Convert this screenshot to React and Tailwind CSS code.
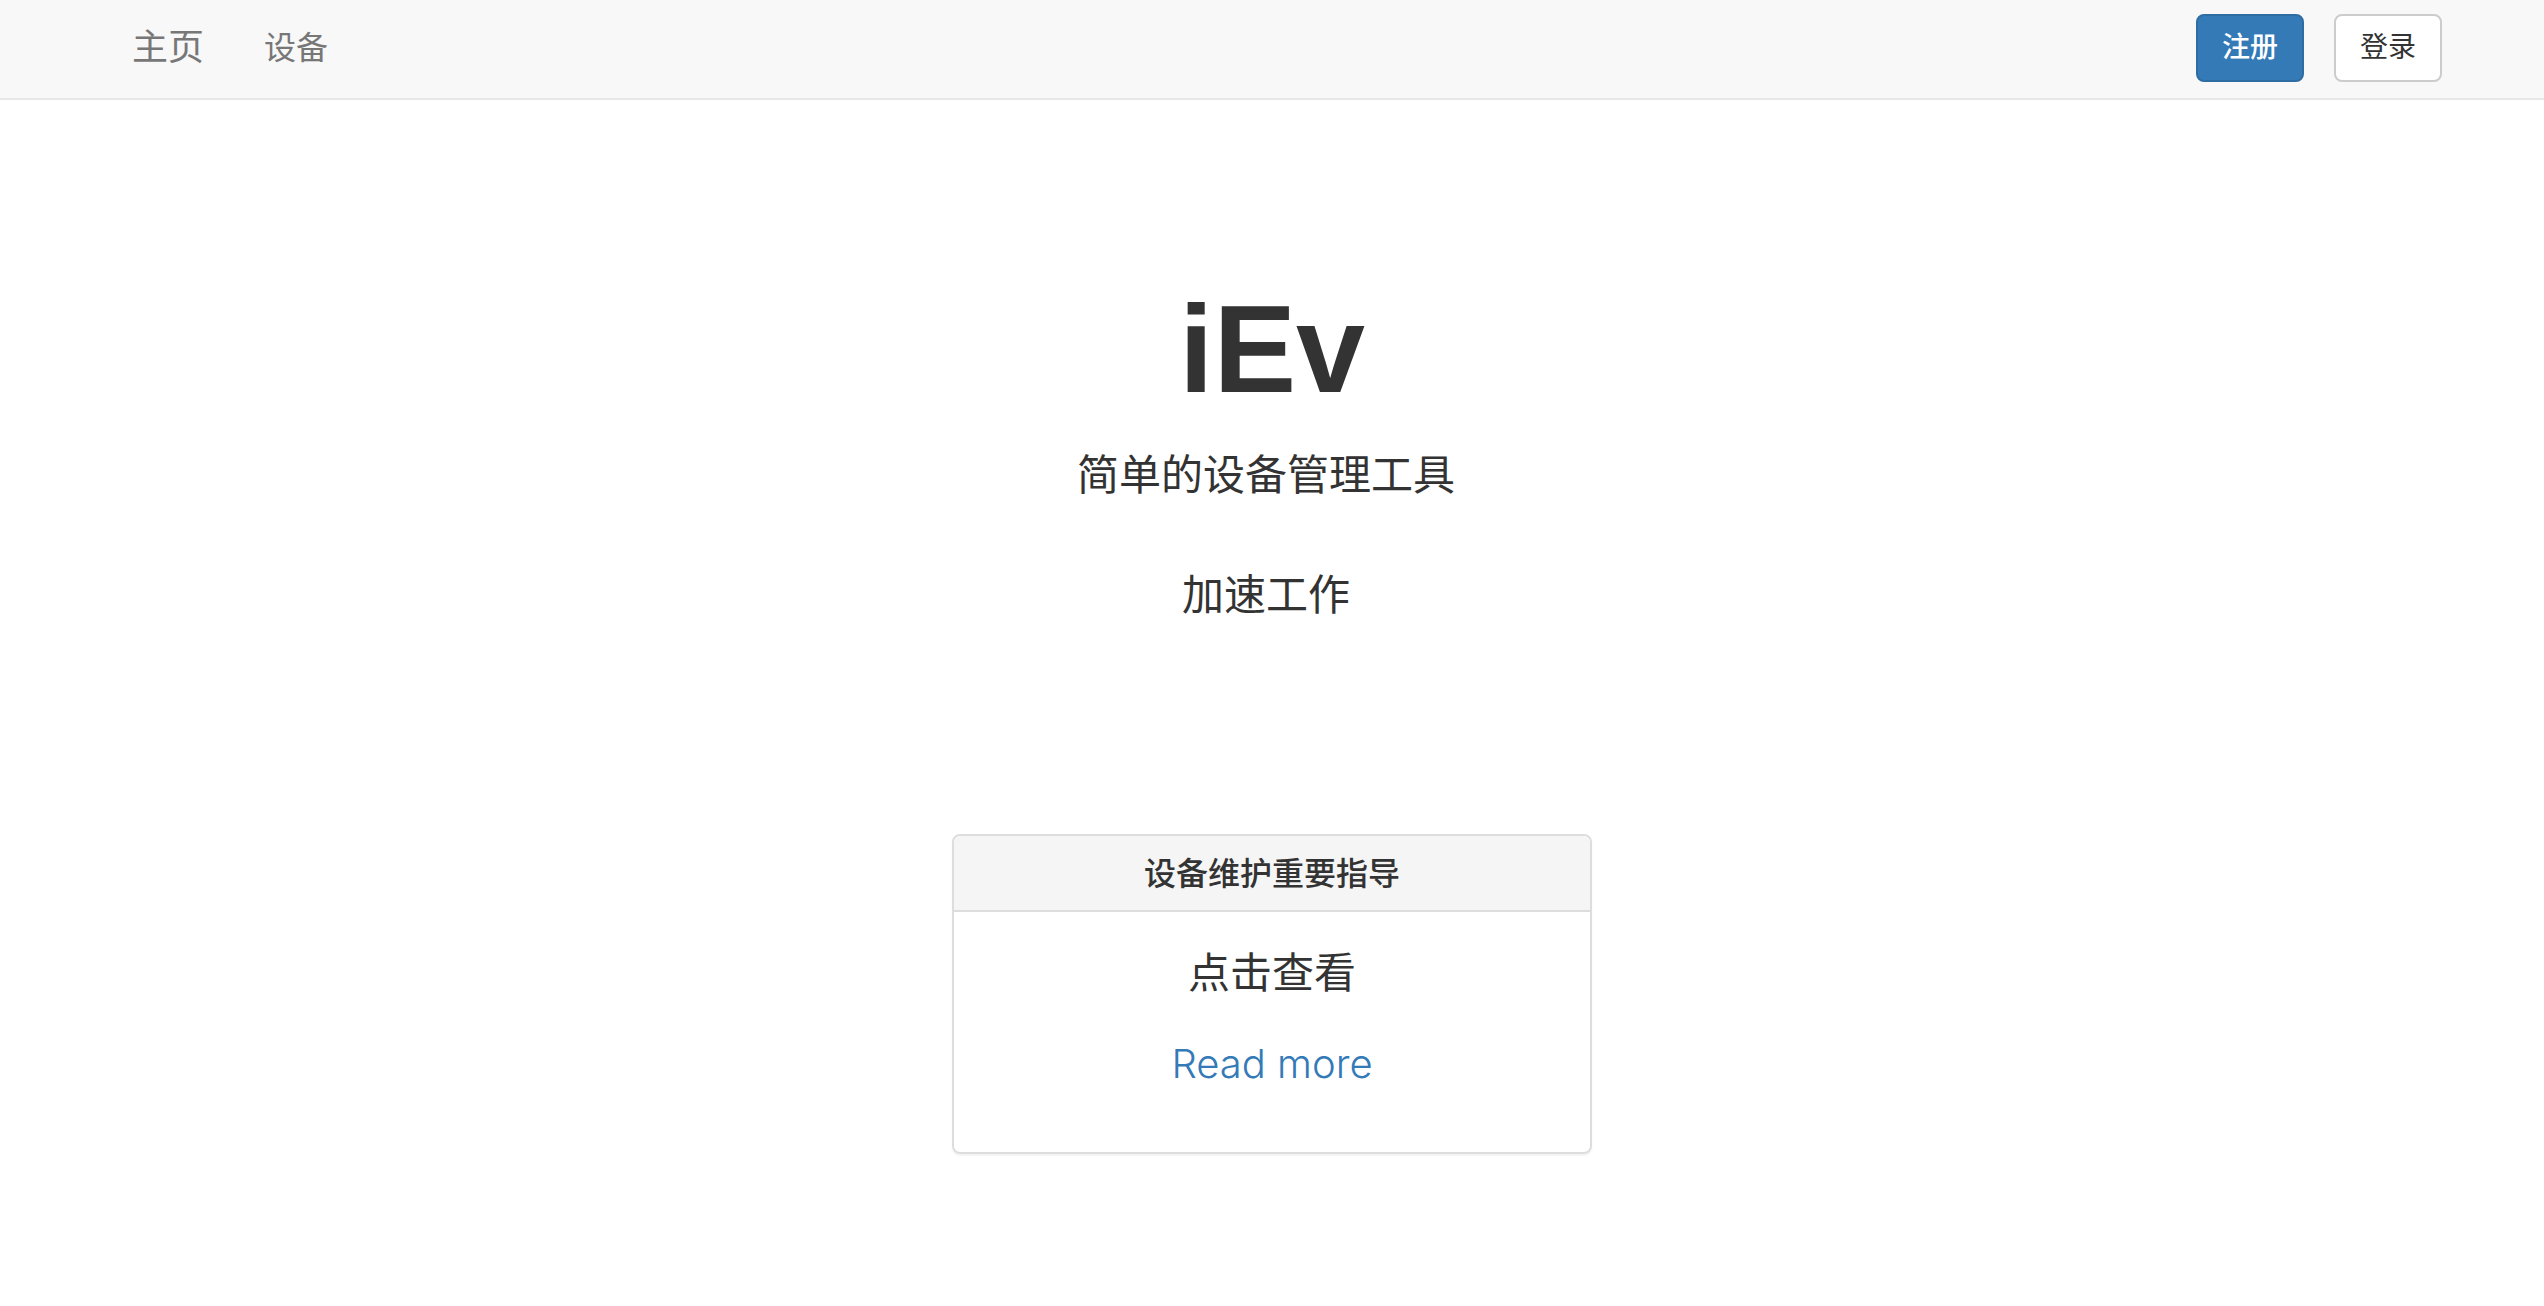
export default function App() {
  return (
    <div className="min-h-screen bg-white text-[#333] font-['Liberation_Sans','Noto_Sans_CJK_SC',sans-serif]">
      <nav className="flex items-center justify-between border-b-2 border-[#e7e7e7] bg-[#f8f8f8] pt-[14px] pr-[102px] pb-4 pl-[132px]">
        <div className="flex items-center gap-[60px] text-[#777]">
          <a href="#home" className="text-[36px] leading-10">主页</a>
          <a href="#devices" className="text-[32px] leading-10">设备</a>
        </div>
        <div className="flex gap-[30px] text-[28px] leading-10">
          <button type="button" className="rounded-lg border-2 border-[#2e6da4] bg-[#337ab7] px-6 py-3 font-medium text-white">注册</button>
          <button type="button" className="rounded-lg border-2 border-[#ccc] bg-white px-6 py-3">登录</button>
        </div>
      </nav>
      <main className="flex flex-col items-center text-center">
        <h1 className="mt-[180px] text-[124px] font-bold leading-[138px]">iEv</h1>
        <div className="mt-7 space-y-[60px] pr-3 text-[42px] leading-[60px]">
          <p>简单的设备管理工具</p>
          <p>加速工作</p>
        </div>
        <section className="mt-[208px] w-[640px] max-w-full rounded-lg border-2 border-[#ddd] shadow-[0_2px_2px_rgba(0,0,0,0.05)]">
          <h2 className="rounded-t-md border-b-2 border-[#ddd] bg-[#f5f5f5] pt-[18px] pb-4 text-[32px] font-medium leading-10">设备维护重要指导</h2>
          <div className="space-y-[30px] px-[30px] pt-8 pb-[58px] text-[42px] leading-[60px]">
            <p>点击查看</p>
            <p className="font-['Inter',sans-serif] text-[40px] font-light">
              <a href="#guide" className="text-[#337ab7]">Read more</a>
            </p>
          </div>
        </section>
      </main>
    </div>
  );
}
